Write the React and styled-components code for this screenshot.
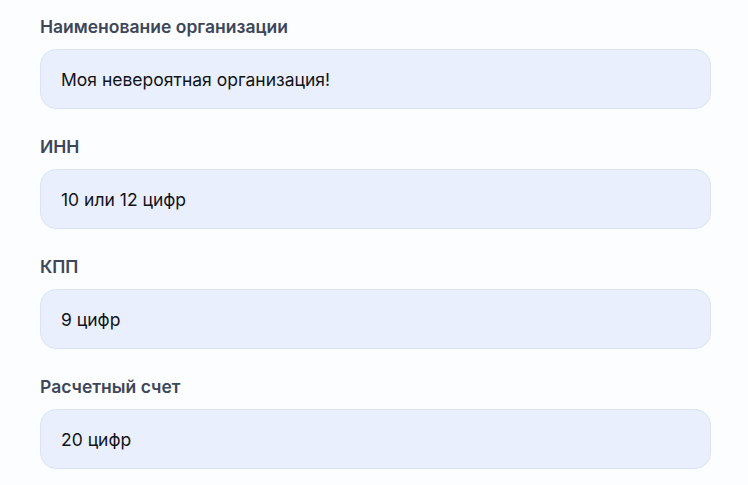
import React from "react";
import styled, { createGlobalStyle } from "styled-components";

const GlobalStyle = createGlobalStyle`
  html, body {
    margin: 0;
    padding: 0;
    background: #fcfdff;
    font-family: Inter, "Noto Sans", sans-serif;
  }
`;

const fields = [
  { label: "Наименование организации", value: "Моя невероятная организация!" },
  { label: "ИНН", value: "10 или 12 цифр" },
  { label: "КПП", value: "9 цифр" },
  { label: "Расчетный счет", value: "20 цифр" },
];

export default function App() {
  return (
    <>
      <GlobalStyle />
      <Form>
        {fields.map((f, i) => (
          <Field key={i}>
            <Label>{f.label}</Label>
            <Input>{f.value}</Input>
          </Field>
        ))}
      </Form>
    </>
  );
}

const Form = styled.div`
  display: flex;
  flex-direction: column;
  gap: 26px;
  padding: 15px 0 0 40px;
  width: 671px;
`;

const Field = styled.div`
  display: flex;
  flex-direction: column;
  gap: 10px;
`;

const Label = styled.div`
  font-size: 17.5px;
  line-height: 24px;
  font-weight: 600;
  color: #3d4759;
`;

const Input = styled.div`
  box-sizing: border-box;
  height: 60px;
  display: flex;
  align-items: center;
  padding: 0 20px;
  background: #e9effd;
  border: 1px solid #dce4f4;
  border-radius: 16px;
  font-size: 17.5px;
  color: #111318;
`;
